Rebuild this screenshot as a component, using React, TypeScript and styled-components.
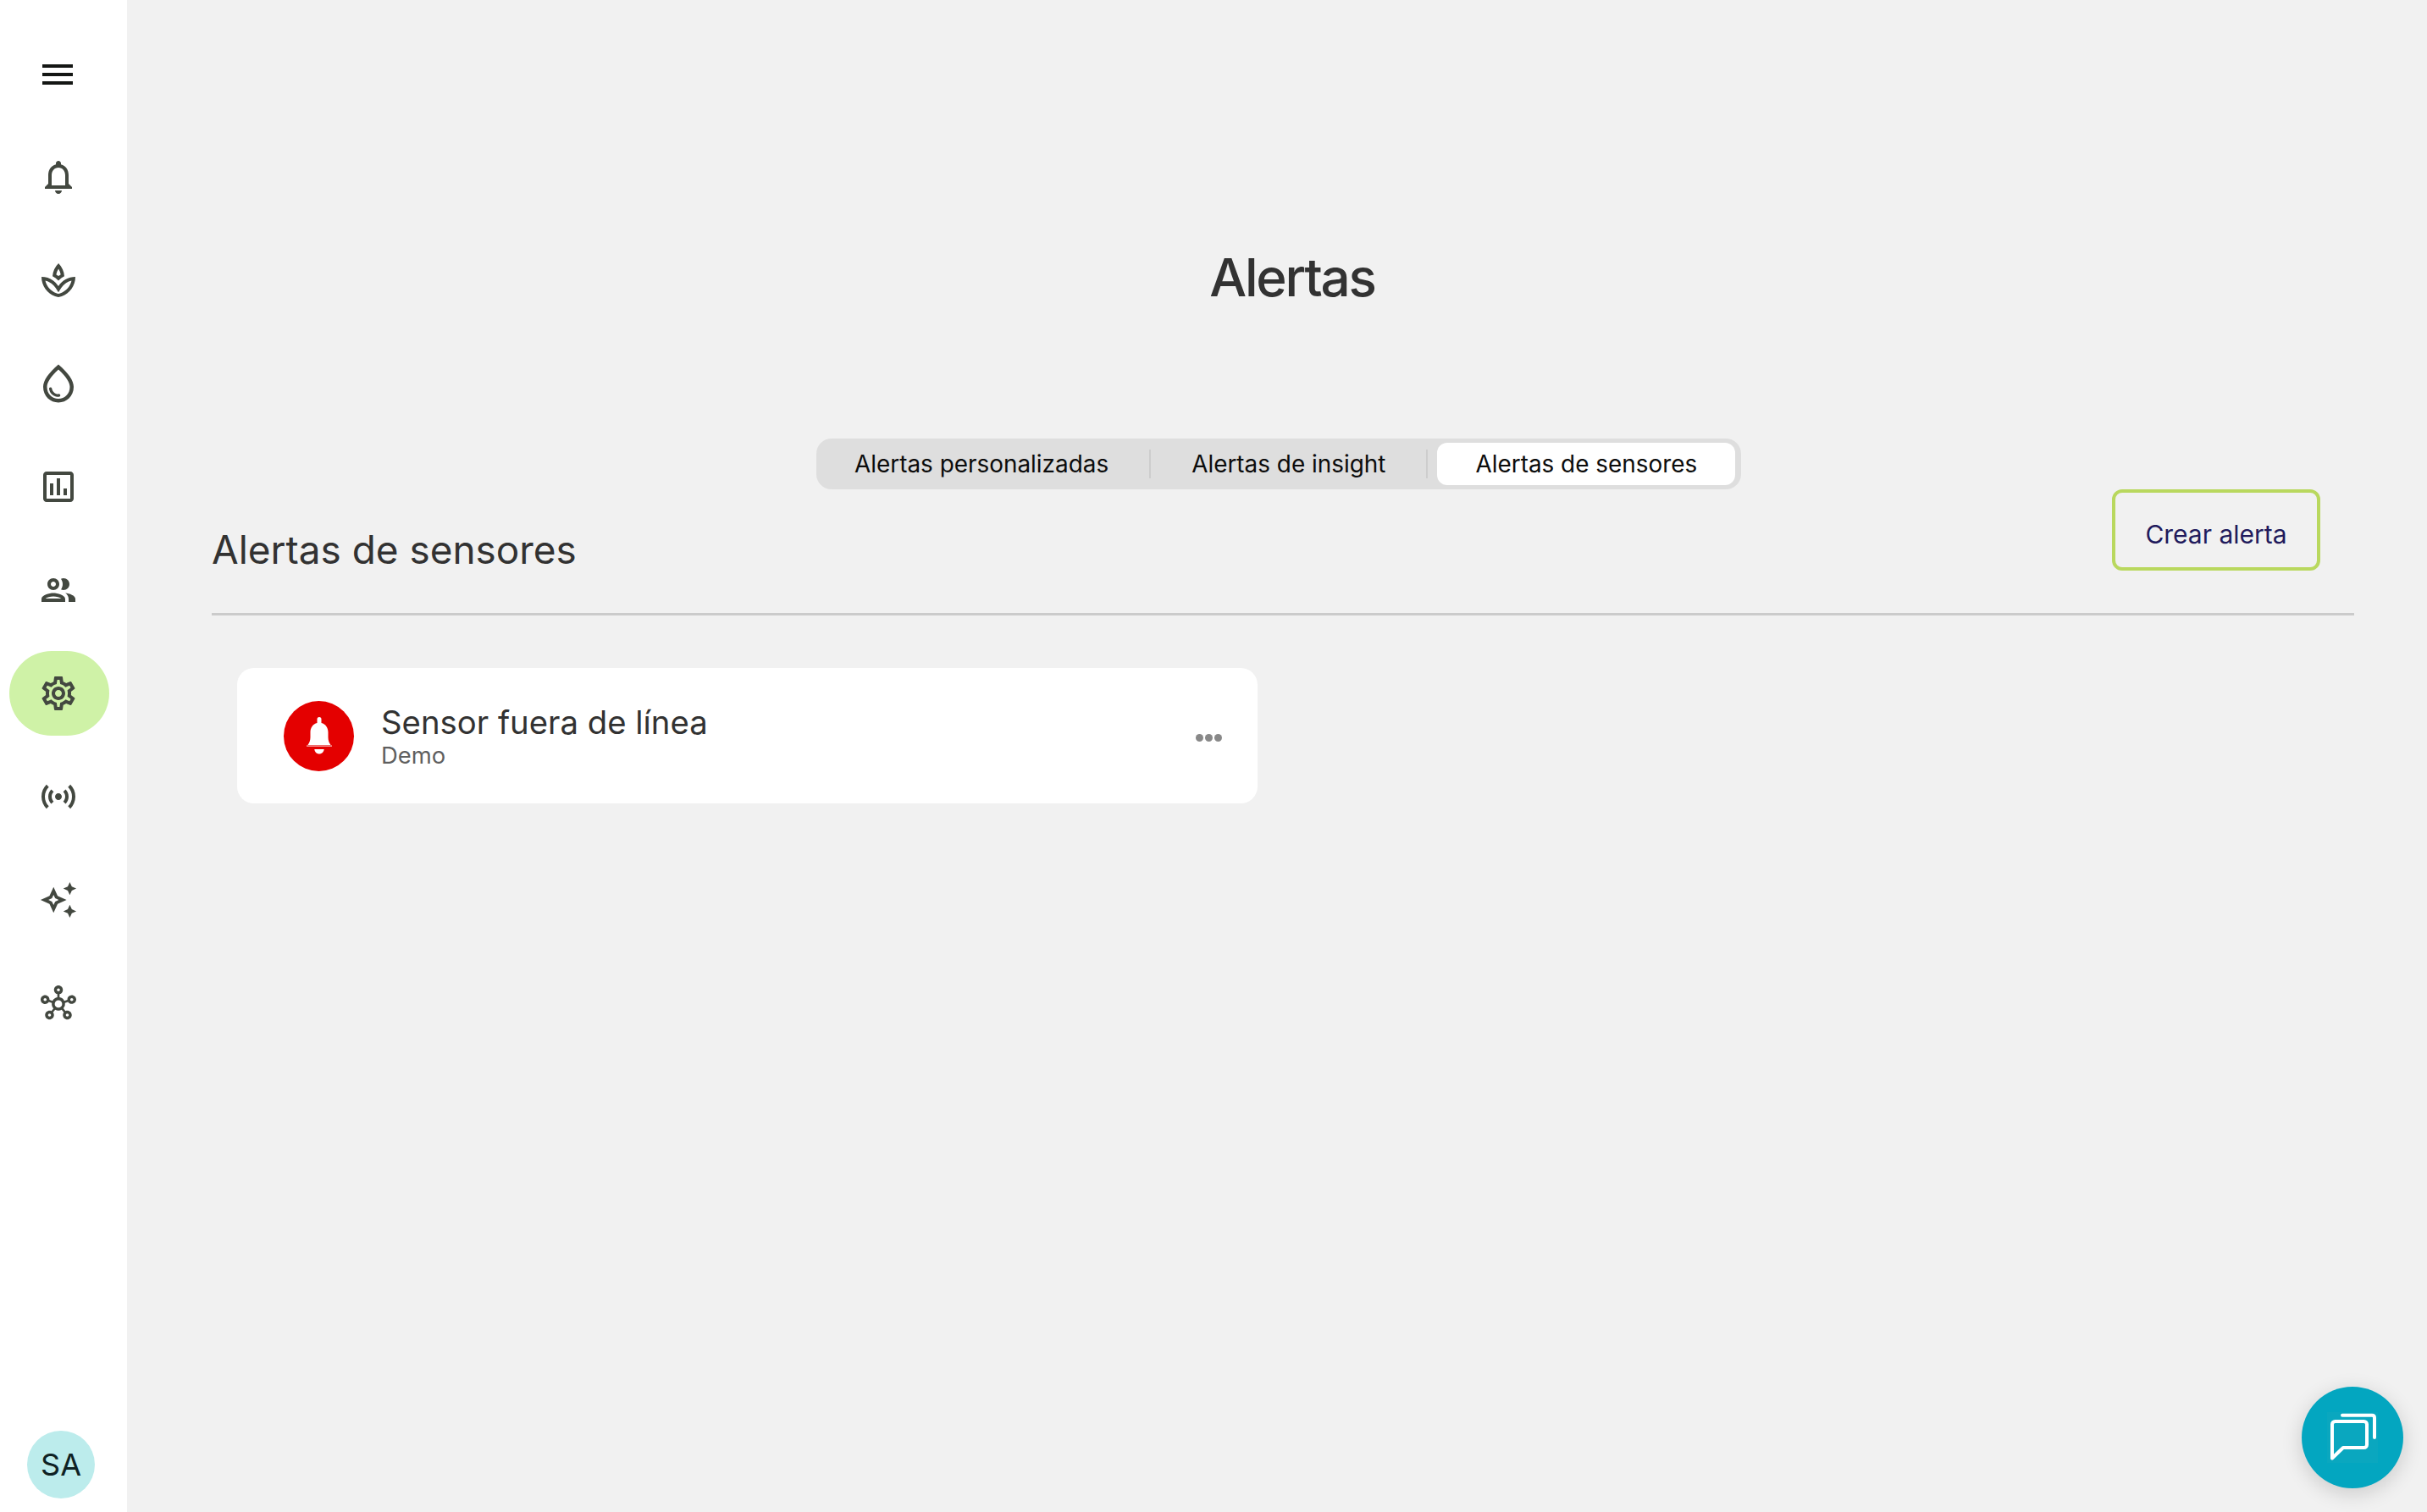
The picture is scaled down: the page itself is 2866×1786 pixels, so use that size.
import React from 'react';
import styled, { createGlobalStyle } from 'styled-components';
import {
  MdMenu,
  MdOutlineNotifications,
  MdOutlineSpa,
  MdOutlineWaterDrop,
  MdOutlineAssessment,
  MdOutlineGroup,
  MdOutlineSettings,
  MdOutlineSensors,
  MdOutlineAutoAwesome,
  MdOutlineHub,
} from 'react-icons/md';

const GlobalStyle = createGlobalStyle`
  html, body {
    margin: 0;
    padding: 0;
    background: #f1f1f1;
    font-family: Inter, "Liberation Sans", sans-serif;
  }
  * {
    box-sizing: border-box;
  }
`;

const navIcons = [
  { icon: MdOutlineNotifications, size: 48 },
  { icon: MdOutlineSpa, size: 48 },
  { icon: MdOutlineWaterDrop, size: 54 },
  { icon: MdOutlineAssessment, size: 48 },
  { icon: MdOutlineGroup, size: 48 },
  { icon: MdOutlineSettings, size: 48, active: true },
  { icon: MdOutlineSensors, size: 48 },
  { icon: MdOutlineAutoAwesome, size: 46 },
  { icon: MdOutlineHub, size: 42 },
];

const tabs = ['Alertas personalizadas', 'Alertas de insight', 'Alertas de sensores'];

const BellIcon = () => (
  <svg width="30" height="44" viewBox="0 0 30 44" fill="#fff">
    <path d="M12.500 2.500a2.500 2.500 0 0 1 5 0V7c5 1.200 8 5.500 8 11v6c0 3.500 1.200 6.500 3 9H1.500c1.800-2.500 3-5.500 3-9v-6c0-5.500 3-9.800 8-11z" />
    <rect x="0" y="33.500" width="30" height="1.200" fill="#fbd0d0" />
    <path d="M9.300 38h11.400c-.4 3.400-2.700 5.500-5.700 5.500s-5.300-2.100-5.700-5.500z" />
  </svg>
);

const ChatIcon = () => (
  <svg width="60" height="60" viewBox="0 0 60 60" fill="none" stroke="#fff" strokeWidth="4" strokeLinecap="round" strokeLinejoin="round">
    <rect width="60" height="60" fill="#0aa7bf" stroke="none" />
    <path d="M6 14.500c0-2 1.500-3.500 3.500-3.500h34c2 0 3.500 1.500 3.500 3.500v24c0 2-1.500 3.500-3.500 3.500H19L6 54.500z" />
    <path d="M18 3.700h35c1.800 0 3 1.200 3 3v23.300" />
  </svg>
);

const App = () => {
  return (
    <Page>
      <GlobalStyle />
      <Sidebar>
        <MenuButton>
          <MdMenu size={48} />
        </MenuButton>
        {navIcons.map((item, index) => (
          <NavItem key={index}>
            <NavPill $active={item.active}>
              <item.icon size={item.size} />
            </NavPill>
          </NavItem>
        ))}
        <Avatar>SA</Avatar>
      </Sidebar>

      <Main>
        <Title>Alertas</Title>
        <TabsRow>
          <Tabs>
            {tabs.map((tab, index) => (
              <React.Fragment key={tab}>
                {index > 0 && <TabDivider />}
                <Tab $active={index === 2}>{tab}</Tab>
              </React.Fragment>
            ))}
          </Tabs>
        </TabsRow>

        <SectionHeader>
          <SectionTitle>Alertas de sensores</SectionTitle>
          <CreateButton>Crear alerta</CreateButton>
        </SectionHeader>

        <AlertCard>
          <AlertBadge>
            <BellIcon />
          </AlertBadge>
          <AlertText>
            <AlertName>Sensor fuera de línea</AlertName>
            <AlertSub>Demo</AlertSub>
          </AlertText>
          <MoreDots>
            <span />
            <span />
            <span />
          </MoreDots>
        </AlertCard>
      </Main>

      <ChatFab>
        <ChatIcon />
      </ChatFab>
    </Page>
  );
};

const Page = styled.div`
  display: flex;
  width: 2866px;
  height: 1786px;
  overflow: hidden;
  background: #f1f1f1;
`;

const Sidebar = styled.aside`
  display: flex;
  flex-direction: column;
  flex: none;
  width: 150px;
  height: 100%;
  padding-top: 27px;
  background: #fff;
`;

const MenuButton = styled.div`
  display: flex;
  align-items: center;
  justify-content: center;
  width: 118px;
  height: 122px;
  margin-left: 9px;
  margin-bottom: -1px;
  color: #141614;
`;

const NavItem = styled.div`
  display: flex;
  align-items: center;
  flex: none;
  height: 122px;
  margin-left: 10px;
`;

const NavPill = styled.div<{ $active?: boolean }>`
  display: flex;
  align-items: center;
  justify-content: center;
  width: 118px;
  height: 100px;
  margin-left: ${(p) => (p.$active ? '1px' : '0')};
  padding-right: ${(p) => (p.$active ? '2px' : '0')};
  border-radius: 50px;
  color: #434840;
  background: ${(p) => (p.$active ? '#cff2a7' : 'transparent')};
`;

const Avatar = styled.div`
  display: flex;
  align-items: center;
  justify-content: center;
  width: 80px;
  height: 80px;
  margin: auto 0 16px 32px;
  border-radius: 50%;
  background: #bcecec;
  color: #0f2224;
  font-size: 36px;
`;

const Main = styled.main`
  display: flex;
  flex-direction: column;
  flex: 1;
  padding: 0 86px 0 100px;
`;

const Title = styled.h1`
  margin: 286px 0 0;
  padding-left: 22px;
  font-size: 62px;
  line-height: 84px;
  letter-spacing: -2.2px;
  font-weight: 500;
  text-align: center;
  color: #323232;
`;

const TabsRow = styled.div`
  display: flex;
  margin-top: 148px;
  padding-left: 714px;
`;

const Tabs = styled.div`
  display: flex;
  align-items: center;
  height: 60px;
  padding: 5px 7px 5px 0;
  border-radius: 18px;
  background: #dedede;
`;

const Tab = styled.div<{ $active?: boolean }>`
  padding: 0 45px;
  height: 50px;
  line-height: 50px;
  font-size: 27.9px;
  white-space: nowrap;
  color: #0c0c0c;
  border-radius: 12px;
  background: ${(p) => (p.$active ? '#fff' : 'transparent')};
  margin-left: ${(p) => (p.$active ? '8px' : '0')};
`;

const TabDivider = styled.div`
  flex: none;
  width: 2px;
  height: 34px;
  margin: 0 3px;
  background: #cdcdcd;
`;

const SectionHeader = styled.div`
  display: flex;
  align-items: flex-start;
  justify-content: space-between;
  height: 149px;
  padding: 0 40px 0 0;
  border-bottom: 3px solid #cbcbcb;
`;

const SectionTitle = styled.h2`
  margin: 43px 0 0;
  font-size: 45.9px;
  line-height: 58px;
  font-weight: 400;
  color: #323232;
`;

const CreateButton = styled.button`
  width: 246px;
  height: 96px;
  padding: 9px 0 0;
  border: 4px solid #b9d85e;
  border-radius: 12px;
  background: transparent;
  font-family: inherit;
  font-size: 30px;
  color: #211a5c;
`;

const AlertCard = styled.div`
  display: flex;
  align-items: center;
  width: 1205px;
  height: 160px;
  margin: 62px 0 0 30px;
  padding: 0 42px 0 55px;
  border-radius: 20px;
  background: #fff;
`;

const AlertBadge = styled.div`
  display: flex;
  align-items: center;
  justify-content: center;
  flex: none;
  width: 83px;
  height: 83px;
  border-radius: 50%;
  background: #e40000;
`;

const AlertText = styled.div`
  display: flex;
  flex-direction: column;
  flex: 1;
  margin-left: 32px;
`;

const AlertName = styled.div`
  font-size: 38.3px;
  line-height: 46px;
  color: #323232;
`;

const AlertSub = styled.div`
  font-size: 27.4px;
  line-height: 32px;
  color: #5f5f5f;
`;

const MoreDots = styled.div`
  display: flex;
  gap: 2px;
  margin-top: 4px;
  span {
    width: 9px;
    height: 9px;
    border-radius: 50%;
    background: #888;
  }
`;

const ChatFab = styled.div`
  position: fixed;
  left: 2718px;
  top: 1638px;
  display: flex;
  align-items: center;
  justify-content: center;
  width: 120px;
  height: 120px;
  border-radius: 50%;
  background: #03a6c0;
  box-shadow: 0 6px 24px rgba(0, 0, 0, 0.16);
`;

export default App;
